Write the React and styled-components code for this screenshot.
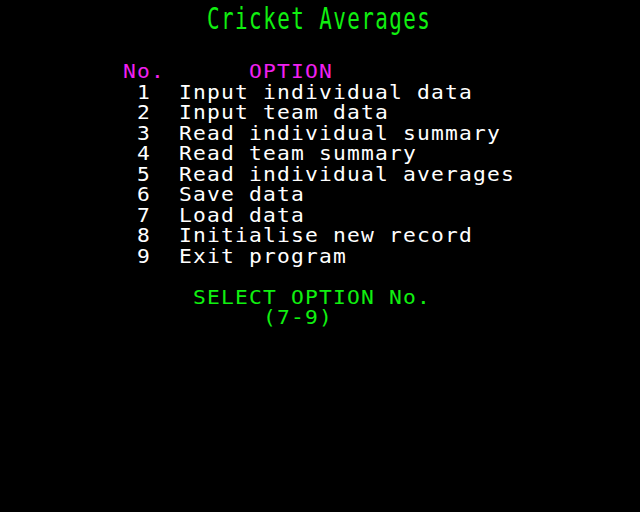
import styled, { createGlobalStyle } from 'styled-components'

const GlobalStyle = createGlobalStyle`
  html, body {
    margin: 0;
    padding: 0;
    background: #000;
  }
`

const colors = {
  white: '#ffffff',
  magenta: '#f020f0',
  green: '#10f010',
}

const ROW = 20.48

const Screen = styled.div`
  width: 640px;
  height: 512px;
  background: #000;
  box-sizing: border-box;
  padding-left: 123px;
  display: grid;
  grid-auto-rows: ${ROW}px;
  align-content: start;
  font-family: 'DejaVu Sans Mono', 'Liberation Mono', monospace;
  overflow: hidden;
`

const Title = styled.div`
  grid-row: span 2;
  white-space: pre;
  color: ${colors.green};
  font-size: 19px;
  line-height: ${ROW}px;
  letter-spacing: 1.3px;
  transform-origin: 0 0;
  transform: translateY(2.2px) scale(1.1, 1.58);
`

const Line = styled.div`
  white-space: pre;
  color: ${({ $color }) => colors[$color] || colors.white};
  font-size: 19px;
  line-height: ${ROW}px;
  letter-spacing: 1.06px;
  transform-origin: 0 0;
  transform: scaleX(1.12);
`

const Gap = styled.div``

const options = [
  'Input individual data',
  'Input team data',
  'Read individual summary',
  'Read team summary',
  'Read individual averages',
  'Save data',
  'Load data',
  'Initialise new record',
  'Exit program',
]

function App() {
  return (
    <>
      <GlobalStyle />
      <Screen>
        <Title>{'      Cricket Averages'}</Title>
        <Gap />
        <Line $color="magenta">{'No.      OPTION'}</Line>
        {options.map((label, i) => (
          <Line key={label}>{` ${i + 1}  ${label}`}</Line>
        ))}
        <Gap />
        <Line $color="green">{'     SELECT OPTION No.'}</Line>
        <Line $color="green">{'          (7-9)'}</Line>
      </Screen>
    </>
  )
}

export default App
